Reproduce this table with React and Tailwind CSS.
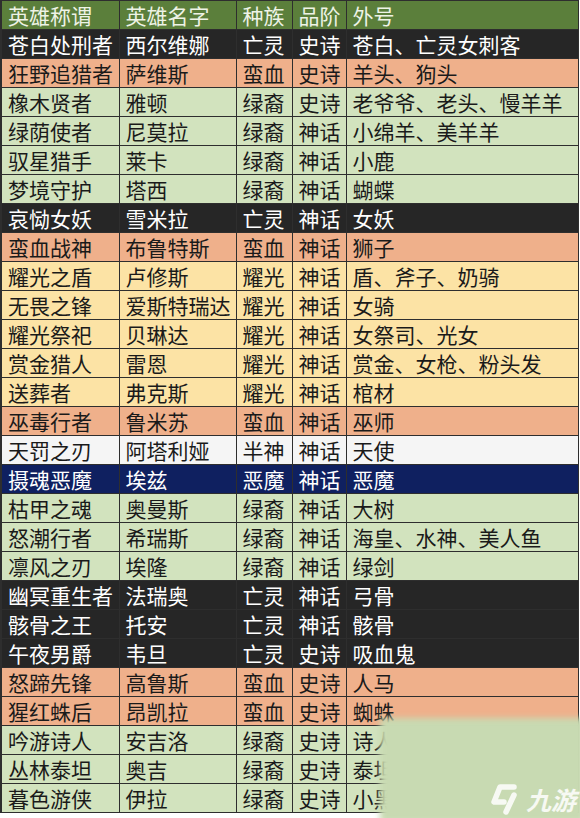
import React from 'react';

const C = {
    head: 'bg-[#5b7f3b] text-[#eef3e6]',
    dark: 'bg-[#262626] text-white',
    red: 'bg-[#efb08b] text-[#1a1a1a]',
    green: 'bg-[#d2e3be] text-[#1a1a1a]',
    gold: 'bg-[#fce3a5] text-[#1a1a1a]',
    white: 'bg-[#f5f5f5] text-[#1a1a1a]',
    navy: 'bg-[#0f2060] text-white',
};

const rows = [
    ['苍白处刑者', '西尔维娜', '亡灵', '史诗', '苍白、亡灵女刺客', 'dark'],
    ['狂野追猎者', '萨维斯', '蛮血', '史诗', '羊头、狗头', 'red'],
    ['橡木贤者', '雅顿', '绿裔', '史诗', '老爷爷、老头、慢羊羊', 'green'],
    ['绿荫使者', '尼莫拉', '绿裔', '神话', '小绵羊、美羊羊', 'green'],
    ['驭星猎手', '莱卡', '绿裔', '神话', '小鹿', 'green'],
    ['梦境守护', '塔西', '绿裔', '神话', '蝴蝶', 'green'],
    ['哀恸女妖', '雪米拉', '亡灵', '神话', '女妖', 'dark'],
    ['蛮血战神', '布鲁特斯', '蛮血', '神话', '狮子', 'red'],
    ['耀光之盾', '卢修斯', '耀光', '神话', '盾、斧子、奶骑', 'gold'],
    ['无畏之锋', '爱斯特瑞达', '耀光', '神话', '女骑', 'gold'],
    ['耀光祭祀', '贝琳达', '耀光', '神话', '女祭司、光女', 'gold'],
    ['赏金猎人', '雷恩', '耀光', '神话', '赏金、女枪、粉头发', 'gold'],
    ['送葬者', '弗克斯', '耀光', '神话', '棺材', 'gold'],
    ['巫毒行者', '鲁米苏', '蛮血', '神话', '巫师', 'red'],
    ['天罚之刃', '阿塔利娅', '半神', '神话', '天使', 'white'],
    ['摄魂恶魔', '埃兹', '恶魔', '神话', '恶魔', 'navy'],
    ['枯甲之魂', '奥曼斯', '绿裔', '神话', '大树', 'green'],
    ['怒潮行者', '希瑞斯', '绿裔', '神话', '海皇、水神、美人鱼', 'green'],
    ['凛风之刃', '埃隆', '绿裔', '神话', '绿剑', 'green'],
    ['幽冥重生者', '法瑞奥', '亡灵', '神话', '弓骨', 'dark'],
    ['骸骨之王', '托安', '亡灵', '神话', '骸骨', 'dark'],
    ['午夜男爵', '韦旦', '亡灵', '史诗', '吸血鬼', 'dark'],
    ['怒蹄先锋', '高鲁斯', '蛮血', '史诗', '人马', 'red'],
    ['猩红蛛后', '昂凯拉', '蛮血', '史诗', '蜘蛛', 'red'],
    ['吟游诗人', '安吉洛', '绿裔', '史诗', '诗人', 'green'],
    ['丛林泰坦', '奥吉', '绿裔', '史诗', '泰坦', 'green'],
    ['暮色游侠', '伊拉', '绿裔', '史诗', '小黑', 'green'],
];

const cell = 'border border-[#2e2e2e] h-[29px] p-0 pl-[6px] text-left align-middle leading-none whitespace-nowrap overflow-hidden';

export default function App() {
    return (
        <div className="relative w-[580px] h-[818px] bg-white overflow-hidden font-['Noto_Sans_CJK_SC',sans-serif] text-[21px]">
            <table className="border-collapse table-fixed w-[577px] border-l-2 border-[#2e2e2e]">
                <colgroup>
                    <col className="w-[118px]" />
                    <col className="w-[117px]" />
                    <col className="w-[56px]" />
                    <col className="w-[54px]" />
                    <col className="w-[232px]" />
                </colgroup>
                <thead>
                    <tr className={C.head}>
                        {['英雄称谓', '英雄名字', '种族', '品阶', '外号'].map((h) => (
                            <th key={h} className={cell + ' font-normal'}>{h}</th>
                        ))}
                    </tr>
                </thead>
                <tbody>
                    {rows.map((r, i) => (
                        <tr key={i} className={C[r[5]]}>
                            {r.slice(0, 5).map((v, j) => (
                                <td key={j} className={cell}>{v}</td>
                            ))}
                        </tr>
                    ))}
                </tbody>
            </table>

            {/* watermark */}
            <div className="absolute left-[380px] top-[718px] w-[205px] h-[105px]">
                <div className="absolute inset-0 bg-[#c8dab2] blur-[3px]" />
                <div className="absolute left-[108px] top-[64px] flex items-center gap-[4px] text-white/85">
                    <svg width="34" height="34" viewBox="0 0 34 34" fill="none" stroke="currentColor" strokeWidth="5.5" strokeLinejoin="round" strokeLinecap="round">
                        <path d="M26 5 H12 L6 20 H16" />
                        <path d="M26 13 L18 30" />
                    </svg>
                    <span className="italic font-bold text-[25px] leading-none">九游</span>
                </div>
            </div>
        </div>
    );
}
